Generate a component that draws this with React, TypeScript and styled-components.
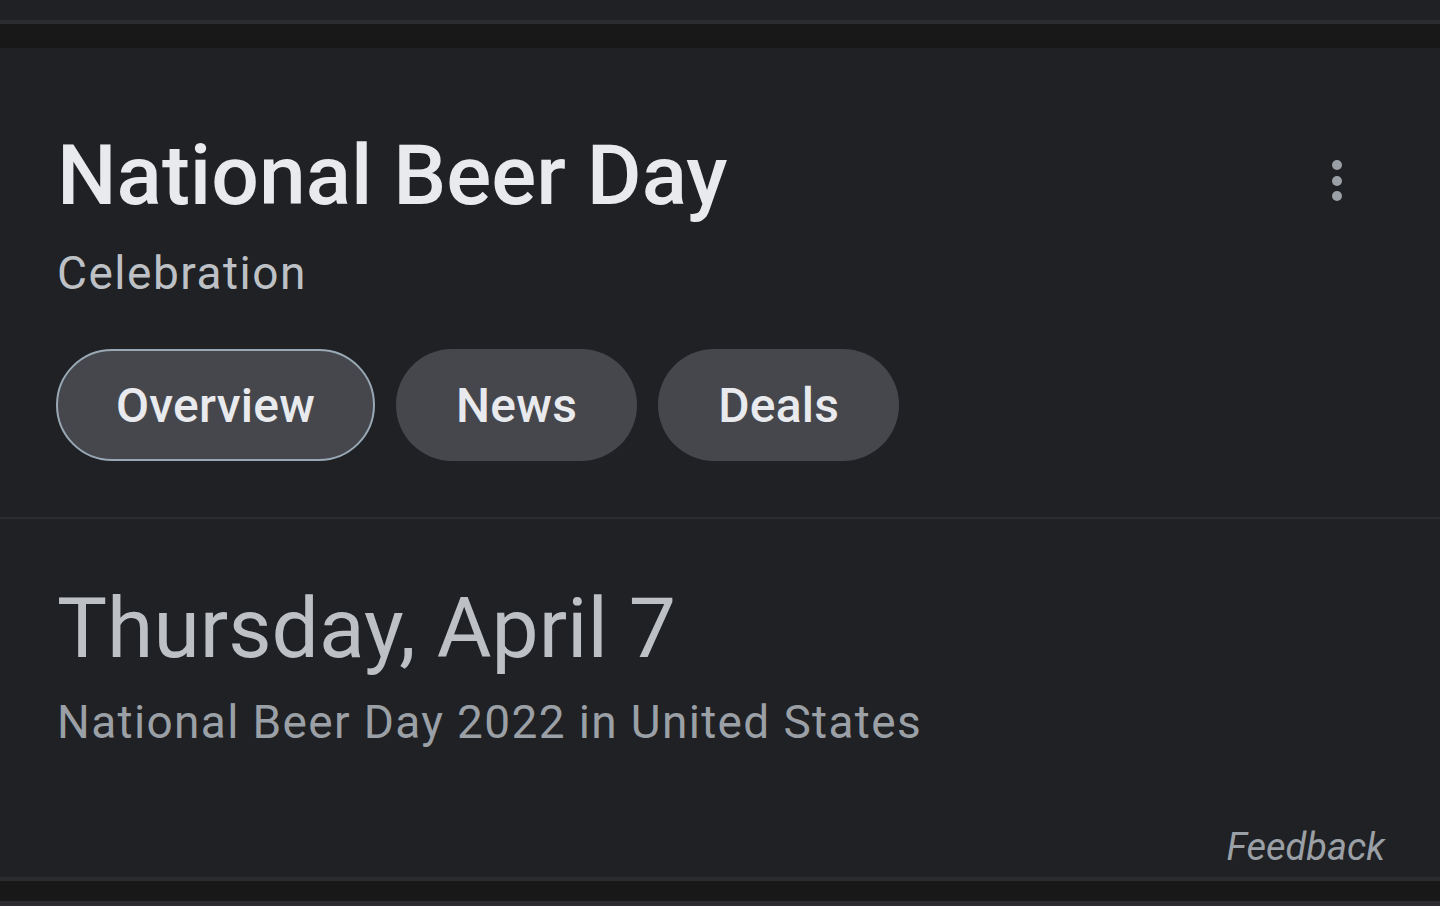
import React from "react";
import styled, { createGlobalStyle } from "styled-components";

const Global = createGlobalStyle`
  html, body { margin: 0; padding: 0; background: #181818; }
  body { font-family: Roboto, "Noto Sans", Arial, sans-serif; }
  * { box-sizing: border-box; }
`;

const Page = styled.div`
  width: 1440px;
  height: 906px;
  overflow: hidden;
  display: flex;
  flex-direction: column;
  background: #181818;
`;

const PrevCard = styled.div`
  height: 24px;
  flex: none;
  background: #202124;
  border-bottom: 4px solid #2b2c30;
`;

const NextCard = styled.div`
  height: 5px;
  flex: none;
  background: #2b2c30;
`;

const Gap = styled.div<{ $h: number }>`
  height: ${(p) => p.$h}px;
  flex: none;
  background: #181818;
`;

const Card = styled.section`
  flex: none;
  height: 833px;
  background: #202124;
  border-bottom: 4px solid #2b2c30;
  display: flex;
  flex-direction: column;
`;

const Header = styled.div`
  padding: 80px 56px 0 56px;
  border-bottom: 2px solid #2c2d31;
  height: 471px;
  display: flex;
  flex-direction: column;
`;

const TitleRow = styled.div`
  display: flex;
  justify-content: space-between;
  align-items: flex-start;
  padding-left: 1px;
`;

const Title = styled.h1`
  margin: 0;
  font-size: 84px;
  line-height: 96px;
  font-weight: 500;
  color: #e8eaed;
  letter-spacing: 0;
`;

const MoreButton = styled.button`
  margin-top: 32px;
  margin-right: 42px;
  width: 10px;
  display: flex;
  flex-direction: column;
  gap: 5.5px;
  background: none;
  border: none;
  padding: 0;
`;

const Dot = styled.span`
  width: 10px;
  height: 10px;
  border-radius: 50%;
  background: #9aa0a6;
`;

const Subtitle = styled.div`
  margin-top: 21px;
  padding-left: 1px;
  font-size: 46px;
  line-height: 56px;
  letter-spacing: 1.5px;
  color: #bdc1c6;
`;

const Chips = styled.div`
  margin-top: 48px;
  display: flex;
  gap: 21px;
`;

const Chip = styled.button<{ $active?: boolean }>`
  height: 112px;
  padding: 0 ${(p) => (p.$active ? 58 : 60)}px;
  border-radius: 56px;
  background: #46474c;
  border: ${(p) => (p.$active ? "2px solid #98a8b5" : "none")};
  color: #e8eaed;
  font-family: Roboto, "Noto Sans", Arial, sans-serif;
  font-size: 48px;
  letter-spacing: 0.25px;
  font-weight: 500;
  display: flex;
  align-items: center;
`;

const Body = styled.div`
  flex: 1;
  padding: 62px 55px 0 57px;
  display: flex;
  flex-direction: column;
`;

const DateText = styled.div`
  font-size: 84px;
  line-height: 96px;
  color: #bdc1c6;
`;

const Detail = styled.div`
  margin-top: 17px;
  font-size: 46px;
  line-height: 56px;
  letter-spacing: 1.35px;
  color: #9aa0a6;
`;

const Feedback = styled.div`
  margin-top: auto;
  margin-bottom: 8px;
  align-self: flex-end;
  font-size: 38px;
  font-style: italic;
  color: #9aa0a6;
`;

export default function App() {
  return (
    <Page>
      <Global />
      <PrevCard />
      <Gap $h={24} />
      <Card>
        <Header>
          <TitleRow>
            <Title>National Beer Day</Title>
            <MoreButton aria-label="More">
              <Dot />
              <Dot />
              <Dot />
            </MoreButton>
          </TitleRow>
          <Subtitle>Celebration</Subtitle>
          <Chips>
            <Chip $active>Overview</Chip>
            <Chip>News</Chip>
            <Chip>Deals</Chip>
          </Chips>
        </Header>
        <Body>
          <DateText>Thursday, April 7</DateText>
          <Detail>National Beer Day 2022 in United States</Detail>
          <Feedback>Feedback</Feedback>
        </Body>
      </Card>
      <Gap $h={20} />
      <NextCard />
    </Page>
  );
}
